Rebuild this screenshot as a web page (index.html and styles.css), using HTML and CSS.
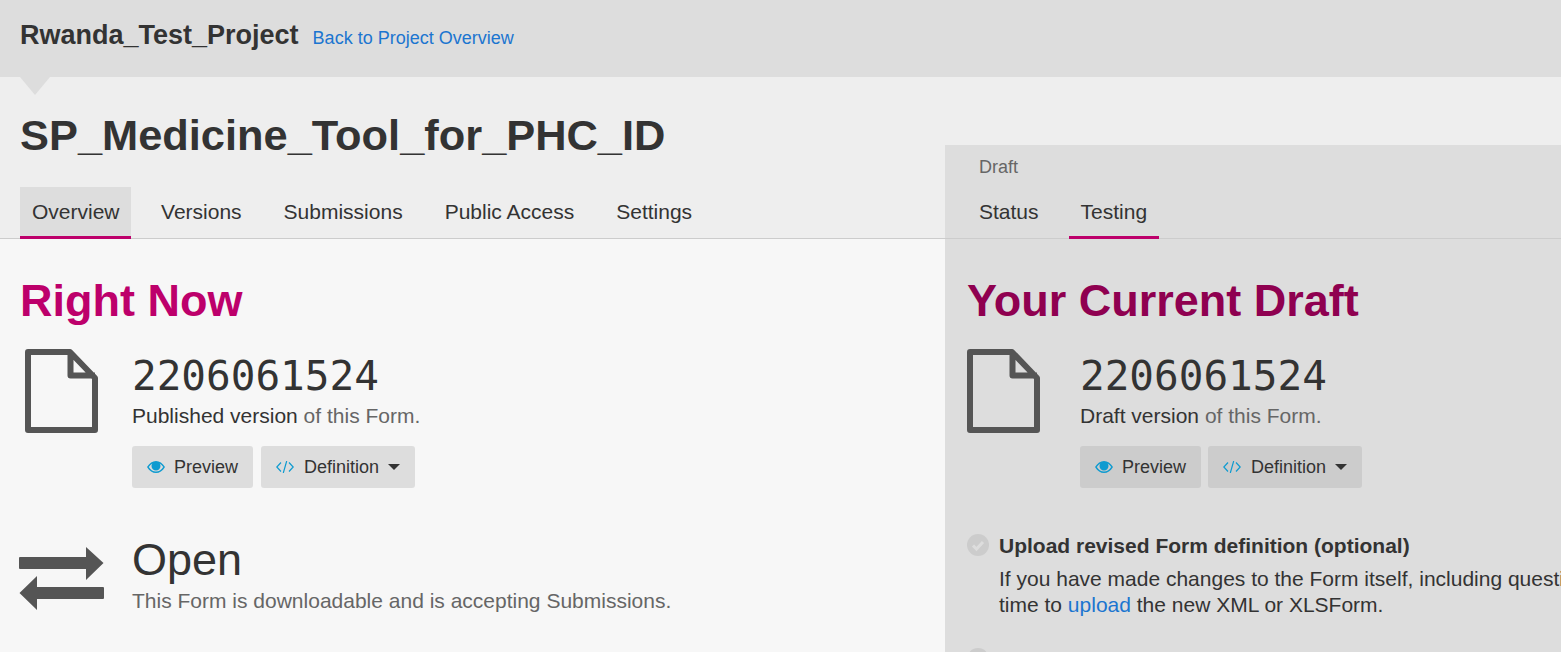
FILE: index.html
```html
<!DOCTYPE html>
<html lang="en">
<head>
    <meta charset="UTF-8">
    <title>Form Overview</title>
    <link rel="stylesheet" href="styles.css">
</head>
<body>
    <div class="project-bar">
        <span class="project-name">Rwanda_Test_Project</span>
        <a class="back-link" href="#">Back to Project Overview</a>
    </div>

    <div class="form-head">
        <h1 class="form-title">SP_Medicine_Tool_for_PHC_ID</h1>
        <div class="tabs">
            <a class="tab active" href="#">Overview</a>
            <a class="tab" href="#">Versions</a>
            <a class="tab" href="#">Submissions</a>
            <a class="tab" href="#">Public Access</a>
            <a class="tab" href="#">Settings</a>
        </div>
    </div>

    <div class="main">
        <h2 class="section-title">Right Now</h2>

        <div class="summary">
            <svg class="file-icon" viewBox="0 0 73 84"><path d="M3 3H45L70 29V81H3Z M45.500 3V26.500H70"/></svg>
            <div class="summary-body">
                <div class="version-name">2206061524</div>
                <p class="caption"><span class="strong">Published version</span> of this Form.</p>
                <div class="actions">
                    <button class="btn">
                        <svg class="btn-icon" viewBox="0 0 18 12"><path class="eye" d="M0 6C2.500 2 5.500 0 9 0s6.500 2 9 6c-2.500 4-5.500 6-9 6S2.500 10 0 6Zm1.800 0C3.800 9 6.200 10.600 9 10.600S14.200 9 16.200 6c-1-1.500-2.200-2.700-3.500-3.500.5.800.8 1.600.8 2.500a4.500 4.500 0 0 1-9 0c0-.9.300-1.700.8-2.500C4 3.300 2.800 4.500 1.800 6Z"/></svg>
                        Preview
                    </button>
                    <button class="btn">
                        <svg class="btn-icon code-icon" viewBox="0 0 18 12"><path class="code" d="M5 1.500 .8 6 5 10.500M13 1.500 17.200 6 13 10.500M10.700 0 7.300 12"/></svg>
                        Definition
                        <span class="caret"></span>
                    </button>
                </div>
            </div>
        </div>

        <div class="summary state">
            <svg class="arrows-icon" viewBox="0 0 85 64"><path d="M1 11H67V1L84.500 17 67 34V23H1Q0 23 0 22V12Q0 11 1 11Z M84 41H18V30L.5 47 18 64V53H84Q85 53 85 52V42Q85 41 84 41Z"/></svg>
            <div class="summary-body">
                <div class="state-name">Open</div>
                <p class="caption">This Form is downloadable and is accepting Submissions.</p>
            </div>
        </div>
    </div>

    <div class="draft-pane">
        <div class="draft-label">Draft</div>
        <div class="tabs draft-tabs">
            <a class="tab" href="#">Status</a>
            <a class="tab active" href="#">Testing</a>
        </div>

        <div class="draft-body">
            <h2 class="section-title draft-title">Your Current Draft</h2>

            <div class="summary">
                <svg class="file-icon" viewBox="0 0 73 84"><path d="M3 3H45L70 29V81H3Z M45.500 3V26.500H70"/></svg>
                <div class="summary-body">
                    <div class="version-name">2206061524</div>
                    <p class="caption"><span class="strong">Draft version</span> of this Form.</p>
                    <div class="actions">
                        <button class="btn">
                            <svg class="btn-icon" viewBox="0 0 18 12"><path class="eye" d="M0 6C2.500 2 5.500 0 9 0s6.500 2 9 6c-2.500 4-5.500 6-9 6S2.500 10 0 6Zm1.800 0C3.800 9 6.200 10.600 9 10.600S14.200 9 16.200 6c-1-1.500-2.200-2.700-3.500-3.500.5.800.8 1.600.8 2.500a4.500 4.500 0 0 1-9 0c0-.9.300-1.700.8-2.500C4 3.300 2.800 4.500 1.800 6Z"/></svg>
                            Preview
                        </button>
                        <button class="btn">
                            <svg class="btn-icon code-icon" viewBox="0 0 18 12"><path class="code" d="M5 1.500 .8 6 5 10.500M13 1.500 17.200 6 13 10.500M10.700 0 7.300 12"/></svg>
                            Definition
                            <span class="caret"></span>
                        </button>
                    </div>
                </div>
            </div>

            <div class="step">
                <svg class="step-icon" viewBox="0 0 22 22"><circle cx="11" cy="11" r="11"/><path d="M6 11.500 9.500 15 16 8" /></svg>
                <div class="step-text">
                    <div class="step-title">Upload revised Form definition (optional)</div>
                    <p class="step-desc">If you have made changes to the Form itself, including question text or rules, now is the<br>time to <a href="#">upload</a> the new XML or XLSForm.</p>
                </div>
            </div>

            <div class="step">
                <svg class="step-icon" viewBox="0 0 22 22"><circle cx="11" cy="11" r="11"/><path d="M6 11.500 9.500 15 16 8" /></svg>
            </div>
        </div>
    </div>
</body>
</html>
```

FILE: styles.css
```css
html, body {
    height: 100%;
}

body {
    margin: 0;
    position: relative;
    overflow: hidden;
    font-family: "Liberation Sans", Arial, sans-serif;
    font-size: 21px;
    color: #333;
    background-color: #f7f7f7;
}

a {
    color: #1b75d0;
    text-decoration: none;
}

.project-bar {
    position: relative;
    display: flex;
    align-items: baseline;
    gap: 14px;
    height: 77px;
    box-sizing: border-box;
    padding: 20px 20px 0;
    background-color: #ddd;
}

.project-bar::after {
    content: "";
    position: absolute;
    left: 20px;
    top: 77px;
    border-style: solid;
    border-width: 18px 15px 0;
    border-color: #ddd transparent transparent;
}

.project-name {
    font-size: 27px;
    font-weight: bold;
}

.back-link {
    font-size: 18px;
}

.form-head {
    height: 161px;
    padding: 0 20px;
    background-color: #eee;
    border-bottom: 1px solid #ccc;
}

.form-title {
    margin: 0;
    padding-top: 33px;
    height: 77px;
    font-size: 43.400px;
    line-height: 50px;
    font-weight: bold;
}

.tabs {
    display: flex;
    gap: 18px;
    height: 52px;
}

.tab {
    display: block;
    box-sizing: border-box;
    height: 52px;
    padding: 11px 12px 0;
    line-height: 27px;
    color: #333;
    border-bottom: 3px solid transparent;
}

.tab.active {
    border-bottom-color: #bd006b;
}

.form-head .tab.active {
    padding-right: 11.500px;
    background-color: #ddd;
}

.main {
    padding: 0 20px;
}

.section-title {
    margin: 0;
    padding-top: 37px;
    font-size: 45px;
    line-height: 50px;
    font-weight: bold;
    color: #bd006b;
}

.draft-title {
    color: #8f0050;
}

.summary {
    display: flex;
    margin-top: 23px;
}

.file-icon {
    flex: none;
    width: 73px;
    height: 84px;
    margin: 0 34px 0 5px;
}

.draft-pane .file-icon {
    margin: 0 40px 0 0;
}

.file-icon path {
    fill: none;
    stroke: #555;
    stroke-width: 6;
    stroke-linejoin: round;
}

.version-name {
    padding-top: 2px;
    font-family: "DejaVu Sans Mono", monospace;
    font-size: 41px;
    line-height: 50px;
}

.caption {
    margin: 0;
    line-height: 30px;
    color: #666;
}

.strong {
    color: #333;
}

.actions {
    display: flex;
    gap: 8px;
    margin-top: 15px;
}

.draft-pane .actions {
    gap: 7px;
}

.btn {
    display: flex;
    align-items: center;
    gap: 9px;
    height: 42px;
    padding: 0 15px;
    border: none;
    border-radius: 3px;
    font-family: inherit;
    font-size: 18px;
    color: #333;
    background-color: #ddd;
}

.draft-pane .btn {
    background-color: #ccc;
}

.btn-icon {
    width: 18px;
    height: 12px;
}

.code-icon {
    margin-right: 1px;
}

.eye {
    fill: #0f9bd0;
}

.code {
    fill: none;
    stroke: #0f9bd0;
    stroke-width: 1.200;
}

.caret {
    border-style: solid;
    border-width: 6px 6px 0;
    border-color: #333 transparent transparent;
}

.state {
    margin-top: 47px;
}

.state .caption {
    margin-top: 1px;
}

.arrows-icon {
    flex: none;
    width: 85px;
    height: 64px;
    margin: 11px 28px 0 -1px;
    fill: #555;
}

.state-name {
    font-size: 45px;
    line-height: 50px;
}

.draft-pane {
    position: absolute;
    left: 945px;
    top: 145px;
    right: 0;
    bottom: 0;
    overflow: hidden;
    background-color: #ddd;
}

.draft-label {
    height: 42px;
    padding: 10px 0 0 34px;
    box-sizing: border-box;
    font-size: 18px;
    line-height: 24px;
    color: #666;
}

.draft-tabs {
    height: 51px;
    padding-left: 22px;
    border-bottom: 1px solid #ccc;
}

.draft-body {
    padding-left: 22px;
}

.step {
    display: flex;
    gap: 10px;
    margin-top: 46px;
    white-space: nowrap;
}

.step + .step {
    margin-top: 30px;
}

.step-icon {
    flex: none;
    width: 22px;
    height: 22px;
}

.step-icon circle {
    fill: #ccc;
}

.step-icon path {
    fill: none;
    stroke: #ddd;
    stroke-width: 3;
}

.step-title {
    font-size: 21px;
    line-height: 24px;
    font-weight: bold;
}

.step-desc {
    margin: 8px 0 0;
    line-height: 26px;
}
```
